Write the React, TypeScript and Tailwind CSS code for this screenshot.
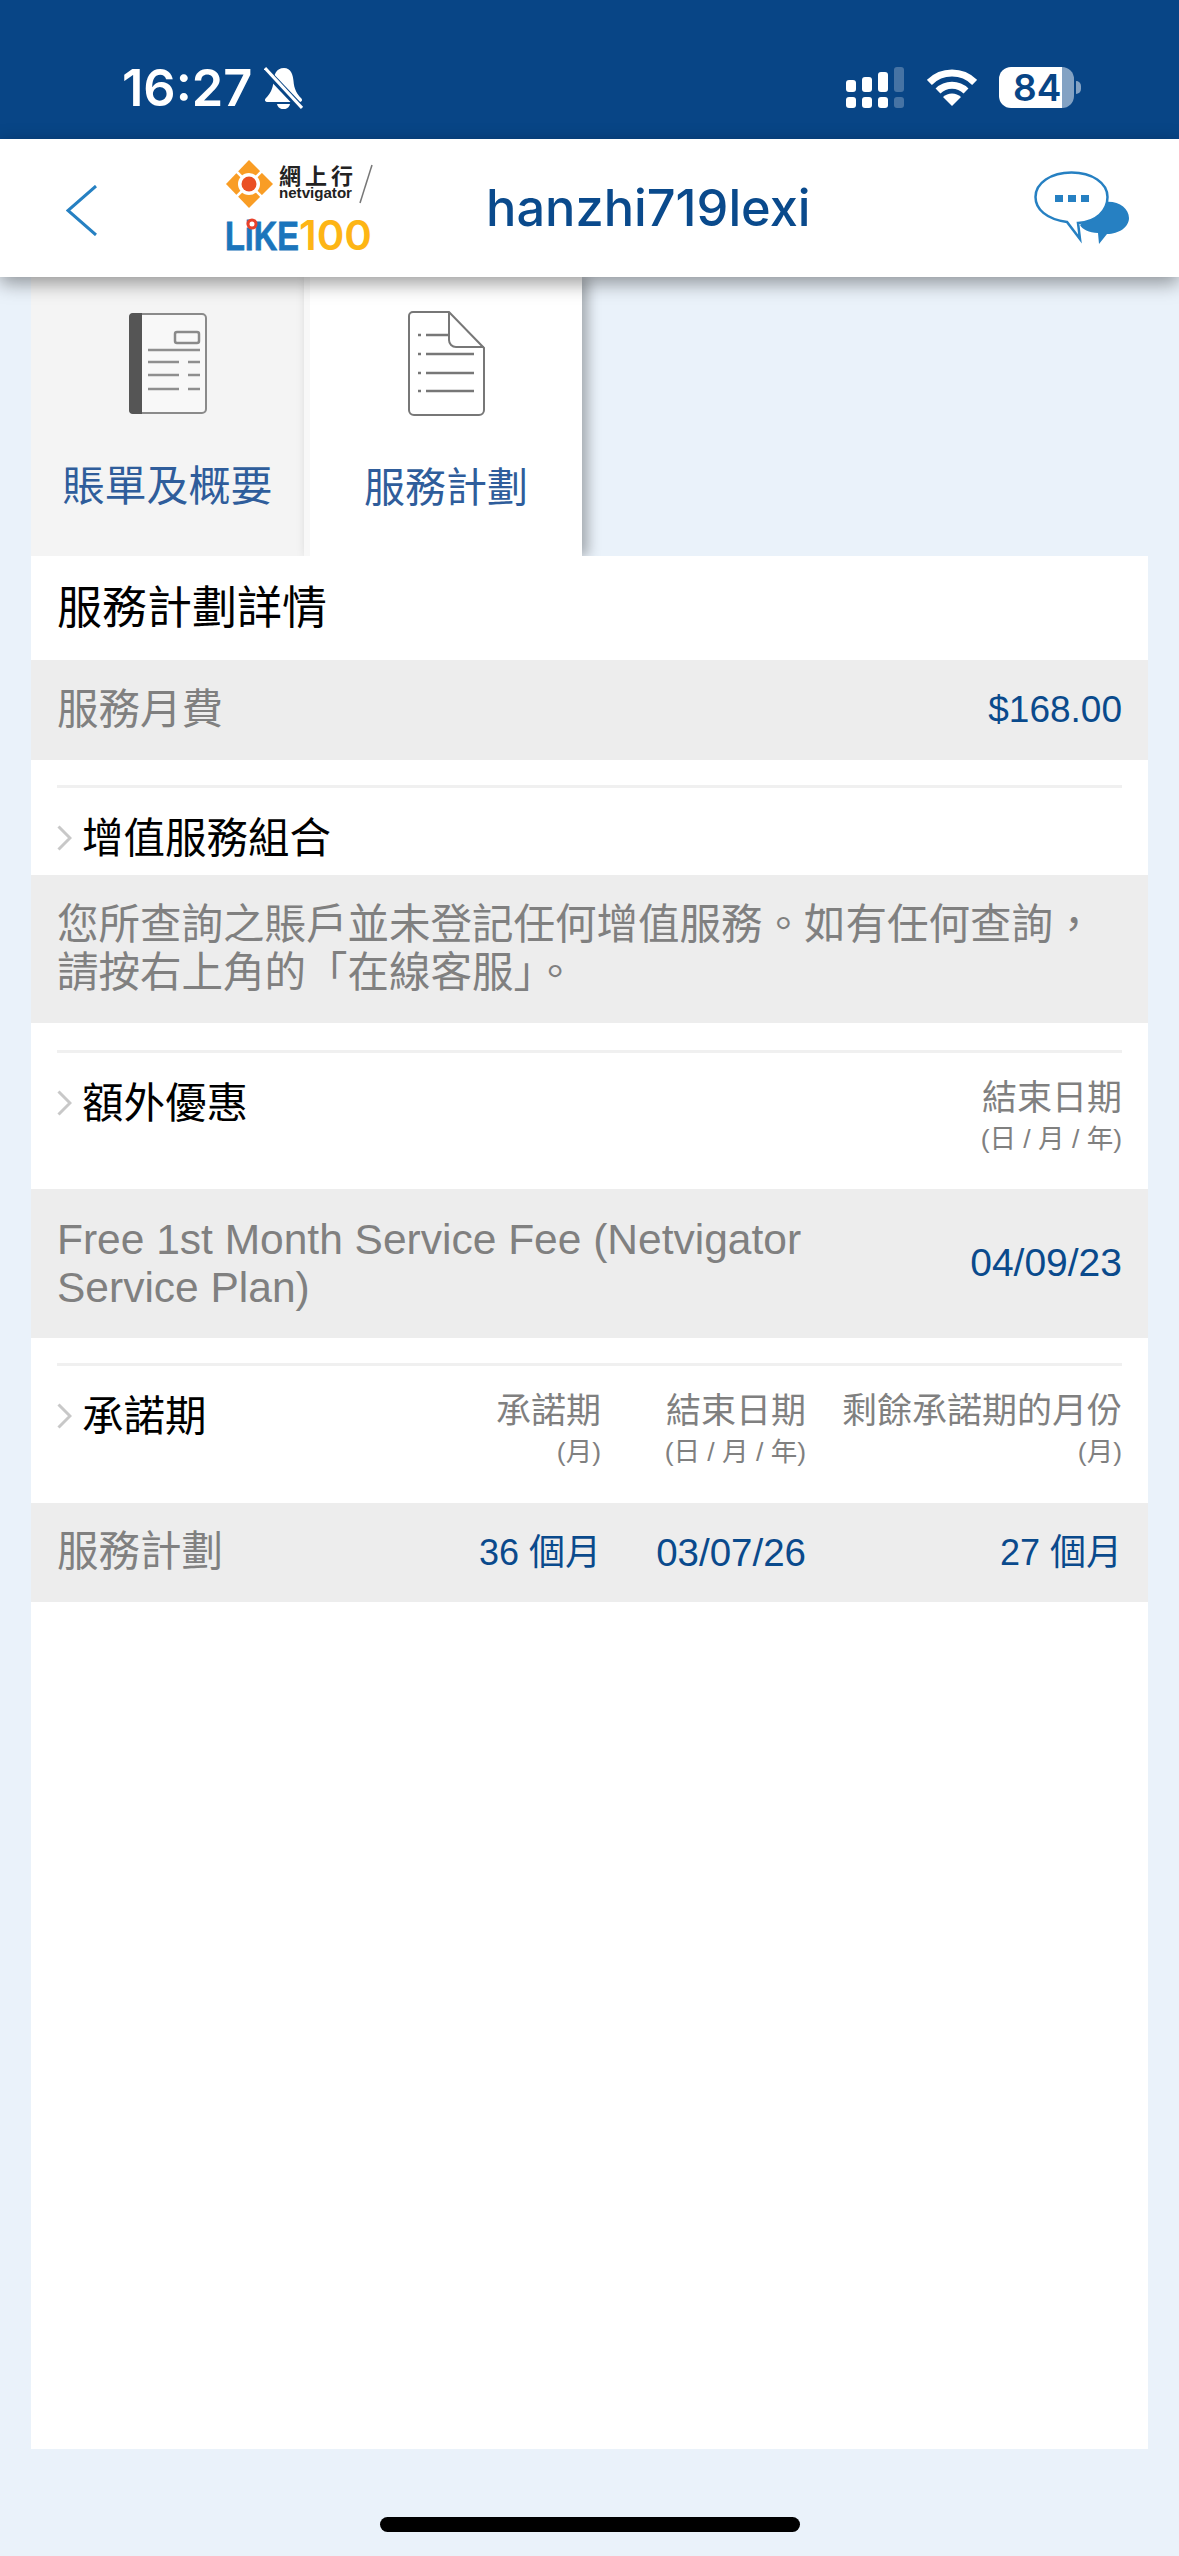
const Chevron = () => (
  <svg viewBox="0 0 15 26" className="mt-[10px] h-[26px] w-[15px] shrink-0 fill-none stroke-[#c8c8c8] stroke-[3]">
    <path d="M1.5 1.5 L13 13 L1.5 24.5" />
  </svg>
);

function StatusBar() {
  return (
    <div className="flex h-[139px] items-start justify-between bg-[#084586] pl-[122px] pr-[98px] pt-[67px] [font-family:Inter,sans-serif]">
      <div className="flex items-center gap-[12px]">
        <span className="text-[50.5px] font-semibold leading-[42px] text-white">16:27</span>
        <svg viewBox="0 0 39 42" className="h-[42px] w-[39px]">
          <path
            d="M20 1 C12 1 10 8 9.5 14 C9 22 6 27 2 31 C0 33 1 35 4 35 H35 C38 35 39 33 37 31 C33 27 30 22 29.5 14 C29 8 27 1 20 1 Z"
            fill="#fff"
          />
          <path d="M13 37 H26 C25 44 14 44 13 37 Z" fill="#fff" />
          <path d="M1 3 L37 41" stroke="#084586" strokeWidth="7" />
          <path d="M1 1 L38 41" stroke="#fff" strokeWidth="3" />
        </svg>
      </div>
      <div className="flex items-center">
        <svg viewBox="0 0 58 41" className="h-[41px] w-[58px] fill-white">
          <rect x="0" y="13" width="10" height="12" rx="3" />
          <rect x="16" y="10" width="10" height="15" rx="3" />
          <rect x="32" y="5" width="10" height="20" rx="3" />
          <rect x="48" y="0" width="10" height="25" rx="3" opacity="0.25" />
          <rect x="0" y="30" width="10" height="11" rx="3" />
          <rect x="16" y="30" width="10" height="11" rx="3" />
          <rect x="32" y="30" width="10" height="11" rx="3" />
          <rect x="48" y="30" width="10" height="11" rx="3" opacity="0.25" />
        </svg>
        <svg viewBox="0 0 50 37" className="ml-[23px] h-[37px] w-[50px] fill-none stroke-white stroke-[7]">
          <path d="M2.4 13.4 A32 32 0 0 1 47.6 13.4" />
          <path d="M11 22 A20 20 0 0 1 39 22" />
          <path d="M25 37 L16 28 A13 13 0 0 1 34 28 Z" className="fill-white stroke-none" />
        </svg>
        <div className="ml-[22px] flex items-center">
          <div className="flex h-[41px] w-[75px] items-center rounded-[12px] bg-[linear-gradient(90deg,#fff_63px,#83a2c3_63px)] pl-[14px] text-[37px] font-semibold leading-none text-[#084586]">
            84
          </div>
          <div className="ml-[2px] h-[13px] w-[5px] rounded-r-full bg-white/50" />
        </div>
      </div>
    </div>
  );
}

function Logo() {
  return (
    <svg viewBox="0 -10 148 112" className="h-[112px] w-[148px] shrink-0">
      <polygon points="24,0 48,24 24,48 1,24" fill="#f99d25" />
      <path d="M8 8 L40 40 M40 8 L8 40" stroke="#fff" strokeWidth="2.5" />
      <circle cx="24" cy="24" r="11" fill="#fff" />
      <circle cx="24" cy="24" r="7.5" fill="#ea4f24" />
      <text x="54" y="24" fontSize="22" fontWeight="700" textLength="74" lengthAdjust="spacing" fill="#222" className="[font-family:'Noto_Sans_CJK_TC',sans-serif]">
        網上行
      </text>
      <text x="54" y="38" fontSize="15" fontWeight="700" textLength="73" lengthAdjust="spacingAndGlyphs" fill="#222" className="[font-family:'Liberation_Sans',sans-serif]">
        netvigator
      </text>
      <path d="M147 5 L135 43" stroke="#777" strokeWidth="1.5" />
      <text x="0" y="90" fontSize="41" fontWeight="700" textLength="74" lengthAdjust="spacingAndGlyphs" fill="#1b75bc" stroke="#1b75bc" strokeWidth="0.8" className="[font-family:'Liberation_Sans',sans-serif]">
        LiKE
      </text>
      <circle cx="27" cy="64" r="4" fill="#fff" stroke="#e8412a" strokeWidth="3" />
      <text x="74" y="90" fontSize="41" fontWeight="600" textLength="73" lengthAdjust="spacingAndGlyphs" fill="#fdb515" className="[font-family:Inter,sans-serif]">
        100
      </text>
    </svg>
  );
}

function Header() {
  return (
    <div className="relative z-10 flex h-[138px] items-center bg-white pl-[66px] pr-[50px] shadow-[0_6px_18px_rgba(0,0,0,0.4)]">
      <svg viewBox="0 0 31 51" className="mt-[4px] h-[51px] w-[31px] shrink-0 fill-none stroke-[#2680c2] stroke-[3]">
        <path d="M30 1 L2 25.5 L30 50" />
      </svg>
      <div className="ml-[128px] mt-[-4px]">
        <Logo />
      </div>
      <div className="ml-[113px] text-[50.5px] font-medium leading-none text-[#0a4a8c] [font-family:Inter,sans-serif]">hanzhi719lexi</div>
      <svg viewBox="0 0 95 73" className="ml-auto mt-[-2px] h-[73px] w-[95px] shrink-0">
        <path
          d="M70 31 C84 29 95 37 95 47 C95 56 85 63 73 63 L65 73 L64 62 C55 62 48 58 46 54 Z"
          fill="#2680c2"
        />
        <path
          d="M37.5 1.5 C17 1.5 1.5 12 1.5 26 C1.5 38 12 48 33 51 L46 68 L44 52 C62 51 73.5 40 73.5 26 C73.5 12 58 1.5 37.5 1.5 Z"
          fill="#fff"
          stroke="#2680c2"
          strokeWidth="2.5"
        />
        <rect x="21" y="24" width="8" height="7" fill="#2680c2" />
        <rect x="34" y="24" width="8" height="7" fill="#2680c2" />
        <rect x="47" y="24" width="8" height="7" fill="#2680c2" />
      </svg>
    </div>
  );
}

function Tabs() {
  return (
    <div className="flex h-[279px] pl-[31px]">
      <div className="flex w-[273px] flex-col items-center bg-[#f4f4f4] pt-[36px]">
        <svg viewBox="0 0 78 101" className="h-[101px] w-[78px]">
          <rect x="1" y="1" width="76" height="99" rx="4" fill="#fff" fillOpacity="0.4" stroke="#8a8a8a" strokeWidth="2" />
          <path d="M4 0 H13 V101 H4 A4 4 0 0 1 0 97 V4 A4 4 0 0 1 4 0 Z" fill="#555" />
          <rect x="46" y="19" width="24" height="11" rx="2" fill="none" stroke="#8a8a8a" strokeWidth="2.5" />
          <path d="M19 37 H71 M19 49 H50 M59 49 H71 M19 62 H50 M59 62 H71 M19 76 H50 M59 76 H71" stroke="#8f8f8f" strokeWidth="2.5" />
        </svg>
        <span className="mt-[49px] text-[42px] leading-[48px] text-[#2f5d9b]">賬單及概要</span>
      </div>
      <div className="flex w-[278px] flex-col items-center border-l-[6px] border-[#f8f8f8] bg-white pt-[34px] shadow-[6px_0_12px_rgba(0,0,0,0.3)]">
        <svg viewBox="0 0 77 105" className="h-[105px] w-[77px] fill-none stroke-[#777] stroke-2">
          <path d="M5 1 H41 L76 37 V99 A5 5 0 0 1 71 104 H6 A5 5 0 0 1 1 99 V5 A4 4 0 0 1 5 1 Z" />
          <path d="M41 1 V29 A7 7 0 0 0 48 36 H76" />
          <path d="M18 24 H41 M18 43 H66 M18 62 H66 M18 80 H66" strokeWidth="2.5" />
          <path d="M10 24 H13 M10 43 H13 M10 62 H13 M10 80 H13" strokeWidth="2.5" />
        </svg>
        <span className="mt-[48px] text-[41px] leading-[48px] text-[#2f5d9b]">服務計劃</span>
      </div>
    </div>
  );
}

const Label = ({ children }: { children: string }) => (
  <div className="mt-[2px] flex items-start gap-[10px]">
    <Chevron />
    <span className="text-[41.5px] leading-[48px] text-black">{children}</span>
  </div>
);

const ColHead = ({ title, unit }: { title: string; unit: string }) => (
  <div className="text-right text-[#808080]">
    <div className="text-[35px] leading-[40px]">{title}</div>
    <div className="mt-[1px] text-[26.5px] leading-[40px]">{unit}</div>
  </div>
);

export default function App() {
  return (
    <div className="flex min-h-[2556px] flex-col bg-[#eaf2fa] [font-family:'Liberation_Sans','Noto_Sans_CJK_TC',sans-serif]">
      <StatusBar />
      <Header />
      <Tabs />
      <div className="relative mx-[31px] flex-1 bg-white">
        <div className="flex h-[104px] items-center px-[26px] pt-[2px] text-[45px] text-black">服務計劃詳情</div>
        <div className="flex h-[100px] items-center justify-between bg-[#ededed] px-[26px]">
          <span className="text-[41.5px] text-[#808080]">服務月費</span>
          <span className="text-[37px] text-[#0a4a8c]">$168.00</span>
        </div>

        <div className="mx-[26px] mt-[25px] h-[90px] border-t-[3px] border-[#f0f0f0] pt-[25px]">
          <Label>增值服務組合</Label>
        </div>
        <div className="h-[148px] bg-[#ededed] px-[26px] pt-[26px] text-[41.5px] leading-[48px] text-[#808080]">
          您所查詢之賬戶並未登記任何增值服務。如有任何查詢，
          <br />
          請按右上角的「在線客服」。
        </div>

        <div className="mx-[26px] mt-[27px] flex h-[139px] items-start justify-between border-t-[3px] border-[#f0f0f0] pt-[25px]">
          <Label>額外優惠</Label>
          <ColHead title="結束日期" unit="(日 / 月 / 年)" />
        </div>
        <div className="flex h-[149px] items-center justify-between bg-[#ededed] px-[26px]">
          <div className="text-[42.5px] leading-[48px] text-[#808080]">
            Free 1st Month Service Fee (Netvigator
            <br />
            Service Plan)
          </div>
          <span className="text-[39px] text-[#0a4a8c]">04/09/23</span>
        </div>

        <div className="mx-[26px] mt-[25px] grid h-[140px] grid-cols-[1fr_170px_205px_316px] items-start border-t-[3px] border-[#f0f0f0] pt-[25px]">
          <Label>承諾期</Label>
          <ColHead title="承諾期" unit="(月)" />
          <ColHead title="結束日期" unit="(日 / 月 / 年)" />
          <ColHead title="剩餘承諾期的月份" unit="(月)" />
        </div>
        <div className="grid h-[99px] grid-cols-[1fr_170px_205px_316px] items-center bg-[#ededed] px-[26px] text-right text-[36px] text-[#0a4a8c]">
          <span className="text-left text-[41.5px] text-[#808080]">服務計劃</span>
          <span>36 個月</span>
          <span className="text-[38.5px]">03/07/26</span>
          <span>27 個月</span>
        </div>
      </div>
      <div className="flex h-[107px] justify-center pt-[68px]">
        <div className="h-[15px] w-[420px] rounded-full bg-black" />
      </div>
    </div>
  );
}
